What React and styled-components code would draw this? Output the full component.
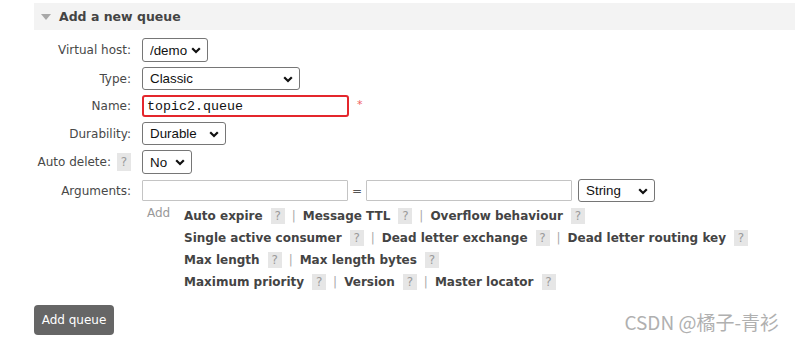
import React from "react";
import styled, { createGlobalStyle } from "styled-components";

const Global = createGlobalStyle`
  html, body { margin: 0; padding: 0; background: #fff; }
  body { font-family: "DejaVu Sans", Verdana, sans-serif; font-size: 12px; color: #484848; }
`;

const Page = styled.div`
  padding: 3px 0 0 34px;
  width: 795px;
  height: 341px;
  box-sizing: border-box;
  position: relative;
  overflow: hidden;
`;

const Header = styled.div`
  height: 27px;
  background: #f3f3f3;
  display: flex;
  align-items: center;
  gap: 8px;
  padding-left: 7px;
`;

const Title = styled.h2`
  margin: 0;
  font-size: 12.5px;
  font-weight: bold;
  color: #444;
`;

const Form = styled.div`
  display: grid;
  grid-template-columns: 97px auto;
  column-gap: 11px;
  row-gap: 5px;
  align-items: center;
  margin-top: 8px;
`;

const Label = styled.div`
  font-size: 12px;
  color: #484848;
  display: flex;
  justify-content: flex-end;
  align-items: center;
  gap: 6px;
  white-space: nowrap;
`;

const Cell = styled.div`
  display: flex;
  align-items: center;
  gap: ${(p) => p.$gap || 0}px;
`;

const SelectWrap = styled.div`
  position: relative;
  width: ${(p) => p.$w}px;
  height: ${(p) => p.$h || 24}px;
  margin-left: ${(p) => p.$ml || 0}px;
`;

const NativeSelect = styled.select`
  appearance: none;
  -webkit-appearance: none;
  width: 100%;
  height: 100%;
  box-sizing: border-box;
  border: 1px solid #767676;
  border-radius: 3px;
  background: #fff;
  font-family: "Liberation Sans", Arial, sans-serif;
  font-size: 13.33px;
  color: #111;
  padding: 0 0 0 7px;
  margin: 0;
  outline: none;
`;

const Chevron = styled.svg`
  position: absolute;
  right: 7px;
  top: 50%;
  margin-top: -3px;
  pointer-events: none;
`;

const Select = ({ w, h, ml, value }) => (
  <SelectWrap $w={w} $h={h} $ml={ml}>
    <NativeSelect defaultValue={value}>
      <option>{value}</option>
    </NativeSelect>
    <Chevron width="10" height="7" viewBox="0 0 10 7">
      <polyline points="1.2,1.2 5,5 8.8,1.2" fill="none" stroke="#111" strokeWidth="2.2" />
    </Chevron>
  </SelectWrap>
);

const TextInput = styled.input`
  box-sizing: border-box;
  width: ${(p) => p.$w}px;
  height: ${(p) => p.$h || 22}px;
  border: ${(p) => (p.$error ? "2px solid #e4262c" : "1px solid #c4c4c4")};
  border-radius: ${(p) => (p.$error ? 3 : 1)}px;
  font-family: ${(p) => (p.$mono ? '"Liberation Mono", "Courier New", monospace' : '"Liberation Sans", Arial, sans-serif')};
  font-size: 13.33px;
  color: #111;
  padding: 0 0 0 3px;
  margin: 0;
  outline: none;
`;

const Required = styled.span`
  color: #f06060;
  font-size: 11px;
  margin-top: -4px;
`;

const Help = styled.span`
  display: inline-flex;
  align-items: center;
  justify-content: center;
  width: 14px;
  height: ${(p) => p.$h || 16}px;
  background: #e6e6e6;
  color: #9a9a9a;
  font-size: 12px;
  font-weight: normal;
`;

const Equals = styled.span`
  color: #555;
  font-size: 12px;
`;

const ArgsHelp = styled.div`
  display: flex;
  align-items: flex-start;
  margin-top: -2px;
`;

const AddText = styled.span`
  color: #999;
  font-size: 12px;
  width: 42px;
  padding-left: 5px;
  box-sizing: border-box;
  line-height: 16px;
`;

const Lines = styled.div`
  display: flex;
  flex-direction: column;
`;

const Line = styled.div`
  display: flex;
  align-items: center;
  height: 22px;
  white-space: nowrap;
`;

const Key = styled.span`
  font-weight: bold;
  color: #444;
  font-size: 12px;
  margin-right: 8px;
`;

const Sep = styled.span`
  color: #aaa;
  margin: 0 7px;
  font-size: 12px;
`;

const Button = styled.button`
  margin-top: 12px;
  width: 80px;
  height: 30px;
  border: none;
  border-radius: 4px;
  background: #666;
  color: #fff;
  font-family: "DejaVu Sans", Verdana, sans-serif;
  font-size: 12px;
  padding: 0;
`;

const Watermark = styled.div`
  position: absolute;
  right: 16px;
  bottom: 6px;
  font-family: "Noto Sans CJK SC", "DejaVu Sans", sans-serif;
  font-size: 19px;
  color: #b0b0b0;
`;

const helpRows = [
  ["Auto expire", "Message TTL", "Overflow behaviour"],
  ["Single active consumer", "Dead letter exchange", "Dead letter routing key"],
  ["Max length", "Max length bytes"],
  ["Maximum priority", "Version", "Master locator"],
];

export default function App() {
  return (
    <>
      <Global />
      <Page>
        <Header>
          <svg width="10" height="6" viewBox="0 0 10 6">
            <polygon points="0,0 10,0 5,6" fill="#a8a8a8" />
          </svg>
          <Title>Add a new queue</Title>
        </Header>
        <Form>
          <Label>Virtual host:</Label>
          <Cell>
            <Select w={66} value="/demo" />
          </Cell>

          <Label>Type:</Label>
          <Cell>
            <Select w={158} h={23} value="Classic" />
          </Cell>

          <Label>Name:</Label>
          <Cell $gap={8}>
            <TextInput $w={207} $mono $error defaultValue="topic2.queue" />
            <Required>*</Required>
          </Cell>

          <Label>Durability:</Label>
          <Cell>
            <Select w={84} h={23} value="Durable" />
          </Cell>

          <Label>
            Auto delete: <Help $h={18}>?</Help>
          </Label>
          <Cell>
            <Select w={50} value="No" />
          </Cell>

          <Label>Arguments:</Label>
          <Cell $gap={4}>
            <TextInput $w={206} $h={21} />
            <Equals>=</Equals>
            <TextInput $w={206} $h={21} />
            <Select w={77} h={23} ml={2} value="String" />
          </Cell>

          <div />
          <ArgsHelp>
            <AddText>Add</AddText>
            <Lines>
              {helpRows.map((row, i) => (
                <Line key={i}>
                  {row.map((k, j) => (
                    <React.Fragment key={k}>
                      {j > 0 && <Sep>|</Sep>}
                      <Key>{k}</Key>
                      <Help>?</Help>
                    </React.Fragment>
                  ))}
                </Line>
              ))}
            </Lines>
          </ArgsHelp>
        </Form>
        <Button>Add queue</Button>
        <Watermark>CSDN @橘子-青衫</Watermark>
      </Page>
    </>
  );
}
